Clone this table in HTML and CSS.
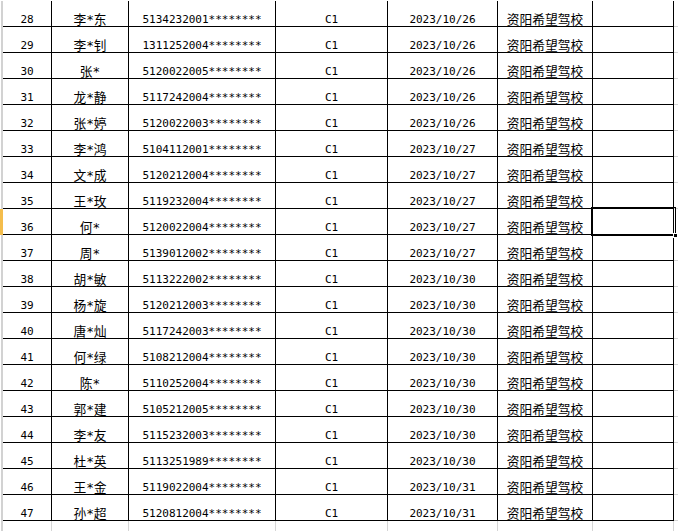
FILE: index.html
```html
<!DOCTYPE html>
<html lang="zh-CN">
<head>
<meta charset="utf-8">
<title>驾校名单</title>
<link rel="stylesheet" href="styles.css">
</head>
<body>
<div class="sheet">
  <div class="hd"></div><div class="c n">28</div><div class="c t">李*东</div><div class="c n">5134232001********</div><div class="c n">C1</div><div class="c n">2023/10/26</div><div class="c t">资阳希望驾校</div><div class="c"></div><div class="x"></div>
  <div class="hd"></div><div class="c n">29</div><div class="c t">李*钊</div><div class="c n">1311252004********</div><div class="c n">C1</div><div class="c n">2023/10/26</div><div class="c t">资阳希望驾校</div><div class="c"></div><div class="x"></div>
  <div class="hd"></div><div class="c n">30</div><div class="c t">张*</div><div class="c n">5120022005********</div><div class="c n">C1</div><div class="c n">2023/10/26</div><div class="c t">资阳希望驾校</div><div class="c"></div><div class="x"></div>
  <div class="hd"></div><div class="c n">31</div><div class="c t">龙*静</div><div class="c n">5117242004********</div><div class="c n">C1</div><div class="c n">2023/10/26</div><div class="c t">资阳希望驾校</div><div class="c"></div><div class="x"></div>
  <div class="hd"></div><div class="c n">32</div><div class="c t">张*婷</div><div class="c n">5120022003********</div><div class="c n">C1</div><div class="c n">2023/10/26</div><div class="c t">资阳希望驾校</div><div class="c"></div><div class="x"></div>
  <div class="hd"></div><div class="c n">33</div><div class="c t">李*鸿</div><div class="c n">5104112001********</div><div class="c n">C1</div><div class="c n">2023/10/27</div><div class="c t">资阳希望驾校</div><div class="c"></div><div class="x"></div>
  <div class="hd"></div><div class="c n">34</div><div class="c t">文*成</div><div class="c n">5120212004********</div><div class="c n">C1</div><div class="c n">2023/10/27</div><div class="c t">资阳希望驾校</div><div class="c"></div><div class="x"></div>
  <div class="hd"></div><div class="c n">35</div><div class="c t">王*玫</div><div class="c n">5119232004********</div><div class="c n">C1</div><div class="c n">2023/10/27</div><div class="c t">资阳希望驾校</div><div class="c"></div><div class="x"></div>
  <div class="hd on"></div><div class="c n">36</div><div class="c t">何*</div><div class="c n">5120022004********</div><div class="c n">C1</div><div class="c n">2023/10/27</div><div class="c t">资阳希望驾校</div><div class="c"></div><div class="x"></div>
  <div class="hd"></div><div class="c n">37</div><div class="c t">周*</div><div class="c n">5139012002********</div><div class="c n">C1</div><div class="c n">2023/10/27</div><div class="c t">资阳希望驾校</div><div class="c"></div><div class="x"></div>
  <div class="hd"></div><div class="c n">38</div><div class="c t">胡*敏</div><div class="c n">5113222002********</div><div class="c n">C1</div><div class="c n">2023/10/30</div><div class="c t">资阳希望驾校</div><div class="c"></div><div class="x"></div>
  <div class="hd"></div><div class="c n">39</div><div class="c t">杨*旋</div><div class="c n">5120212003********</div><div class="c n">C1</div><div class="c n">2023/10/30</div><div class="c t">资阳希望驾校</div><div class="c"></div><div class="x"></div>
  <div class="hd"></div><div class="c n">40</div><div class="c t">唐*灿</div><div class="c n">5117242003********</div><div class="c n">C1</div><div class="c n">2023/10/30</div><div class="c t">资阳希望驾校</div><div class="c"></div><div class="x"></div>
  <div class="hd"></div><div class="c n">41</div><div class="c t">何*绿</div><div class="c n">5108212004********</div><div class="c n">C1</div><div class="c n">2023/10/30</div><div class="c t">资阳希望驾校</div><div class="c"></div><div class="x"></div>
  <div class="hd"></div><div class="c n">42</div><div class="c t">陈*</div><div class="c n">5110252004********</div><div class="c n">C1</div><div class="c n">2023/10/30</div><div class="c t">资阳希望驾校</div><div class="c"></div><div class="x"></div>
  <div class="hd"></div><div class="c n">43</div><div class="c t">郭*建</div><div class="c n">5105212005********</div><div class="c n">C1</div><div class="c n">2023/10/30</div><div class="c t">资阳希望驾校</div><div class="c"></div><div class="x"></div>
  <div class="hd"></div><div class="c n">44</div><div class="c t">李*友</div><div class="c n">5115232003********</div><div class="c n">C1</div><div class="c n">2023/10/30</div><div class="c t">资阳希望驾校</div><div class="c"></div><div class="x"></div>
  <div class="hd"></div><div class="c n">45</div><div class="c t">杜*英</div><div class="c n">5113251989********</div><div class="c n">C1</div><div class="c n">2023/10/30</div><div class="c t">资阳希望驾校</div><div class="c"></div><div class="x"></div>
  <div class="hd"></div><div class="c n">46</div><div class="c t">王*金</div><div class="c n">5119022004********</div><div class="c n">C1</div><div class="c n">2023/10/31</div><div class="c t">资阳希望驾校</div><div class="c"></div><div class="x"></div>
  <div class="hd"></div><div class="c n">47</div><div class="c t">孙*超</div><div class="c n">5120812004********</div><div class="c n">C1</div><div class="c n">2023/10/31</div><div class="c t">资阳希望驾校</div><div class="c"></div><div class="x"></div>
  <div class="hd"></div><div class="g"></div><div class="g"></div><div class="g"></div><div class="g"></div><div class="g"></div><div class="g"></div><div class="g"></div><div class="gx"></div>
  <div class="sel"><span class="handle"></span></div>
</div>
</body>
</html>
```
FILE: styles.css
```css
html, body {
  margin: 0;
  padding: 0;
  background: #ffffff;
  overflow: hidden;
}

.sheet {
  position: relative;
  display: grid;
  grid-template-columns: 3px 49px 77px 147px 112px 110px 95px 81px 1fr;
  grid-auto-rows: 26px;
  padding-top: 1px;
  width: 678px;
  height: 531px;
  box-sizing: border-box;
  color: #000;
}

.hd {
  background: linear-gradient(to right, #ffffff 1px, #d2d2d2 1px);
}

.hd.on {
  background: #f4bd4c;
}

.c {
  box-sizing: border-box;
  border-right: 1px solid #000;
  border-bottom: 1px solid #000;
  display: flex;
  align-items: flex-end;
  justify-content: center;
  white-space: nowrap;
  overflow: hidden;
  font-family: "DejaVu Sans Mono", "Noto Sans CJK SC", monospace;
}

.n {
  font-size: 11px;
  line-height: 12px;
}

.t {
  font-size: 12.75px;
  line-height: 13px;
}

.x {
  border-bottom: 1px solid #d6d6d6;
}

.g {
  box-sizing: border-box;
  border-right: 1px solid #d6d6d6;
}

.gx {
  background: #fff;
}

.sel {
  position: absolute;
  left: 591px;
  top: 207px;
  width: 85px;
  height: 29px;
  box-sizing: border-box;
  border: 1px solid #000;
}

.handle {
  position: absolute;
  right: -3px;
  bottom: -3px;
  width: 3px;
  height: 3px;
  background: #000;
  border: 1px solid #fff;
}
```
